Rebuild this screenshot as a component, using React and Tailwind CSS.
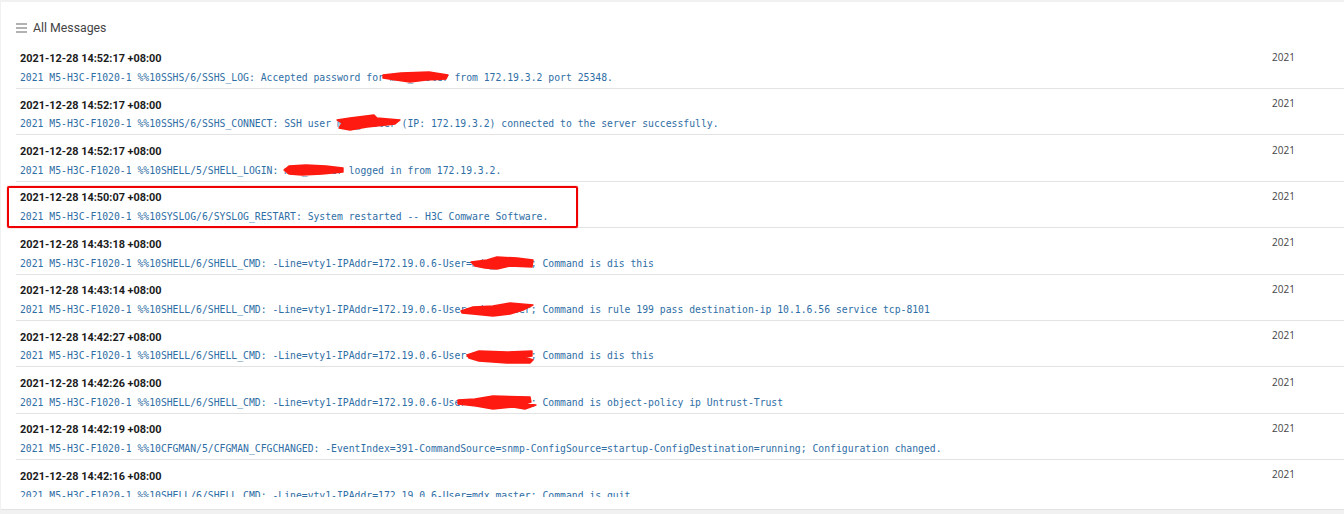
const rows = [
  { time: "2021-12-28 14:52:17 +08:00", before: "2021 M5-H3C-F1020-1 %%10SSHS/6/SSHS_LOG: Accepted password for ", user: "mdx_master", after: " from 172.19.3.2 port 25348.", scribble: { left: -7, top: 1, width: 65, height: 10, d: "M0 3 L18 1 L46 0 L65 3 L63 7 L43 8 L27 10 L13 8 L0 6 Z" } },
  { time: "2021-12-28 14:52:17 +08:00", before: "2021 M5-H3C-F1020-1 %%10SSHS/6/SSHS_CONNECT: SSH user ", user: "mdx_master", after: " (IP: 172.19.3.2) connected to the server successfully.", scribble: { left: 0, top: -2, width: 63, height: 15, d: "M0 5 L13 3 L37 0 L40 3 L63 5 L58 9 L30 12 L13 15 L2 13 L5 8 Z" } },
  { time: "2021-12-28 14:52:17 +08:00", before: "2021 M5-H3C-F1020-1 %%10SHELL/5/SHELL_LOGIN: ", user: "mdx_master", after: " logged in from 172.19.3.2.", scribble: { left: 0, top: 1.6, width: 59, height: 10, d: "M0 5 L5 1 L22 0 L42 1 L59 3 L59 7 L38 9 L18 10 L5 9 Z" } },
  { time: "2021-12-28 14:50:07 +08:00", text: "2021 M5-H3C-F1020-1 %%10SYSLOG/6/SYSLOG_RESTART: System restarted -- H3C Comware Software." },
  { time: "2021-12-28 14:43:18 +08:00", before: "2021 M5-H3C-F1020-1 %%10SHELL/6/SHELL_CMD: -Line=vty1-IPAddr=172.19.0.6-User=", user: "mdx_master", after: "; Command is dis this", scribble: { left: -1, top: 0.4, width: 62, height: 12, d: "M0 5 L16 3 L26 0 L46 1 L62 3 L61 10 L39 9 L26 12 L14 11 L4 9 Z" } },
  { time: "2021-12-28 14:43:14 +08:00", before: "2021 M5-H3C-F1020-1 %%10SHELL/6/SHELL_CMD: -Line=vty1-IPAddr=172.19.0.6-User=", user: "mdx_master", after: "; Command is rule 199 pass destination-ip 10.1.6.56 service tcp-8101", scribble: { left: -11, top: 0, width: 72, height: 13, d: "M0 8 L12 4 L32 3 L49 0 L72 2 L62 7 L49 11 L32 13 L12 11 L1 10 Z" } },
  { time: "2021-12-28 14:42:27 +08:00", before: "2021 M5-H3C-F1020-1 %%10SHELL/6/SHELL_CMD: -Line=vty1-IPAddr=172.19.0.6-User=", user: "mdx_master", after: "; Command is dis this", scribble: { left: -5, top: 1, width: 66, height: 13, d: "M0 5 L12 1 L40 2 L65 1 L65 6 L58 7 L66 10 L63 13 L40 13 L12 11 L2 8 Z" } },
  { time: "2021-12-28 14:42:26 +08:00", before: "2021 M5-H3C-F1020-1 %%10SHELL/6/SHELL_CMD: -Line=vty1-IPAddr=172.19.0.6-User=", user: "mdx_master", after: "; Command is object-policy ip Untrust-Trust", scribble: { left: -14, top: 0.2, width: 78, height: 13, d: "M0 4 L17 3 L35 0 L72 1 L73 6 L67 8 L78 9 L67 13 L55 11 L35 13 L18 10 L0 8 Z" } },
  { time: "2021-12-28 14:42:19 +08:00", text: "2021 M5-H3C-F1020-1 %%10CFGMAN/5/CFGMAN_CFGCHANGED: -EventIndex=391-CommandSource=snmp-ConfigSource=startup-ConfigDestination=running; Configuration changed." },
  { time: "2021-12-28 14:42:16 +08:00", text: "2021 M5-H3C-F1020-1 %%10SHELL/6/SHELL_CMD: -Line=vty1-IPAddr=172.19.0.6-User=mdx_master; Command is quit" },
];

const Scribble = ({ left, top, width, height, d }) => (
  <svg
    className="absolute overflow-visible"
    style={{ left, top }}
    width={width}
    height={height}
    viewBox={`0 0 ${width} ${height}`}
  >
    <path d={d} fill="#fe1a10" stroke="#fe1a10" strokeWidth="1.4" strokeLinejoin="round" />
  </svg>
);

const MessageRow = ({ row }) => (
  <li className="h-[46.4px] shrink-0 border-b border-[#e3e3e3] pl-1 flex justify-between">
    <div className="min-w-0">
      <div className="pt-[8.6px] text-[10.9px] leading-[15px] font-bold text-[#1c1c1c] font-['Roboto',sans-serif]">
        {row.time}
      </div>
      <div className="mt-[4.9px] text-[9.75px] leading-[13px] whitespace-pre text-[#2f6ea5] font-['DejaVu_Sans_Mono',monospace]">
        {row.text ? (
          row.text
        ) : (
          <>
            {row.before}
            <span className="relative inline-block">
              {row.user}
              <Scribble {...row.scribble} />
            </span>
            {row.after}
          </>
        )}
      </div>
    </div>
    <div className="w-[72px] shrink-0 pt-[7.3px] text-[10px] leading-[14px] text-[#444] font-['Open_Sans',sans-serif]">
      2021
    </div>
  </li>
);

export default function App() {
  return (
    <div className="relative h-[514px] w-[1344px] overflow-hidden bg-[#f1f1f1] pt-[2px] pl-[1px] pb-[4px]">
      <div className="h-full border-b border-[#e2e2e2] bg-white pl-[15px]">
        <div className="flex h-[40px] items-center gap-[6px] pt-[12px]">
          <svg width="11" height="10" viewBox="0 0 11 10" className="text-[#999]">
            <path d="M0 1h11M0 5h11M0 9h11" stroke="currentColor" strokeWidth="1.4" />
          </svg>
          <span className="text-[12.3px] text-[#444] font-['Roboto',sans-serif]">All Messages</span>
        </div>
        <ul className="mt-[0.6px] flex h-[454px] flex-col overflow-hidden">
          {rows.map((row) => (
            <MessageRow key={row.time + row.after} row={row} />
          ))}
        </ul>
      </div>
      <div className="absolute left-[7px] top-[186px] h-[42px] w-[571px] rounded-[2px] border-2 border-[#f00000] shadow-[0_0_1px_#f00000]" />
    </div>
  );
}
